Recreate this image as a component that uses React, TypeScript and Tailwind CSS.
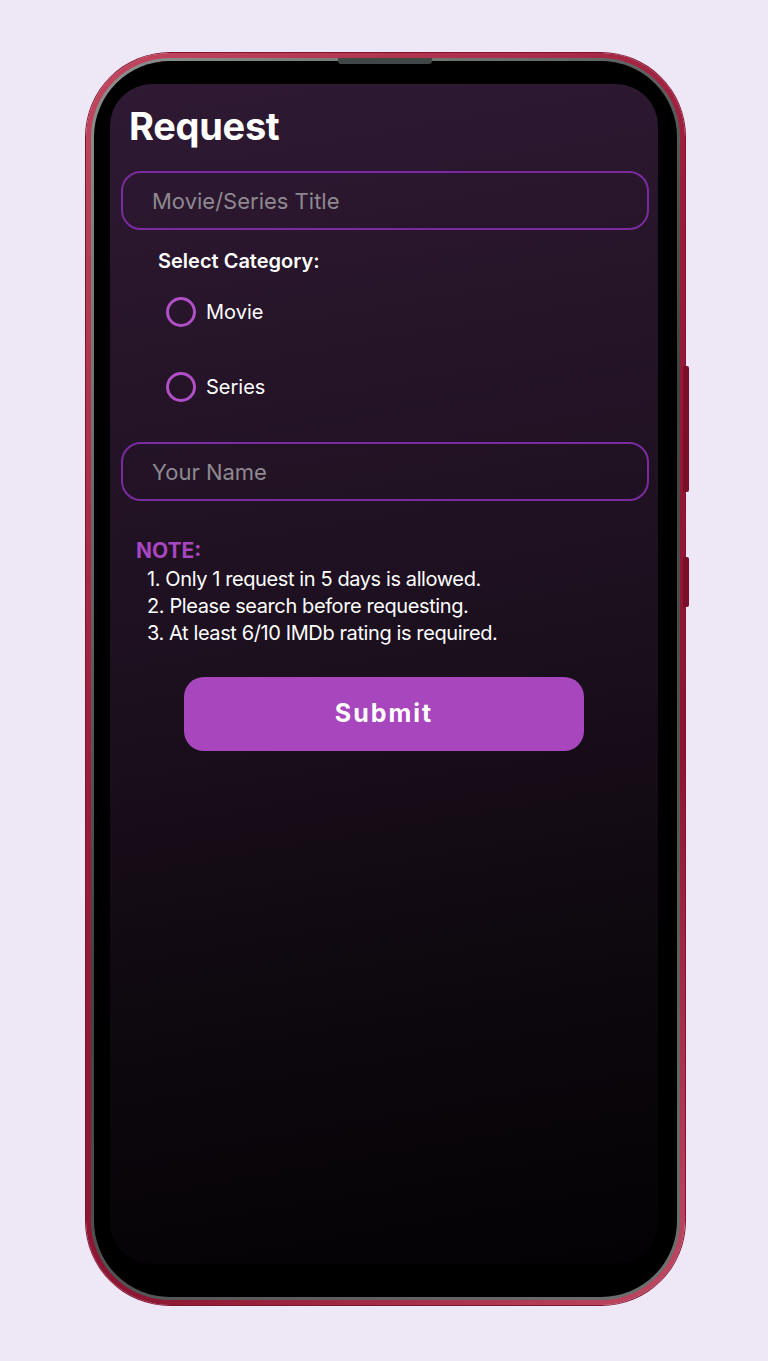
import React, { useState } from 'react';

const font = { fontFamily: 'Inter, "Noto Sans", sans-serif' };

const notes = [
    '1. Only 1 request in 5 days is allowed.',
    '2. Please search before requesting.',
    '3. At least 6/10 IMDb rating is required.',
];

function Radio({ label, checked, onSelect }: { label: string; checked: boolean; onSelect: () => void }) {
    return (
        <button type="button" onClick={onSelect} className="flex h-[40px] items-center pl-[45px] text-left">
            <span className="flex h-[30px] w-[30px] items-center justify-center rounded-full border-[3px] border-[#b04fc6]">
                {checked && <span className="h-[14px] w-[14px] rounded-full bg-[#b04fc6]" />}
            </span>
            <span className="ml-[10px] text-[20px] leading-[24px] text-white">{label}</span>
        </button>
    );
}

export default function App() {
    const [category, setCategory] = useState('');

    return (
        <div className="h-[1361px] w-[768px] bg-[#ede7f6] pl-[86px] pt-[53px]" style={font}>
            {/* phone body */}
            <div className="relative h-[1252px] w-[599px]">
                {/* side buttons */}
                <div className="absolute right-[-4px] top-[313px] h-[126px] w-[6px] rounded-r-[2px] bg-[#7a0f2a]" />
                <div className="absolute right-[-4px] top-[504px] h-[50px] w-[6px] rounded-r-[2px] bg-[#7a0f2a]" />

                <div className="h-full w-full rounded-[84px] bg-[linear-gradient(135deg,#c2475f_0%,#9b1b3a_40%,#8c1532_70%,#c04a63_100%)] p-[5px] shadow-[0_0_0_1px_#7d1430]">
                    <div className="h-full w-full rounded-[79px] bg-[linear-gradient(135deg,#8d9190_0%,#3f4343_50%,#6d7170_100%)] p-[3px]">
                        <div className="flex h-full w-full flex-col rounded-[76px] bg-black pb-[33px] pl-[16px] pr-[19px] pt-[23px]">
                            {/* screen */}
                            <div className="flex-1 overflow-hidden rounded-[42px] bg-[linear-gradient(170deg,#2f1933_0%,#251428_25%,#1b0f1d_50%,#0c070d_78%,#040204_100%)] px-[11px] pt-[19px]">
                                <h1 className="ml-[8px] text-[38px] font-bold leading-[46px] tracking-[-0.3px] text-white">
                                    Request
                                </h1>

                                <input
                                    className="mt-[22px] block h-[59px] w-[528px] rounded-[20px] border-2 border-[#7a2ba0] bg-transparent px-[29px] text-[22px] text-white outline-none placeholder:text-[#8e8991]"
                                    placeholder="Movie/Series Title"
                                />

                                <p className="ml-[37px] mt-[19px] text-[20px] font-semibold leading-[24px] text-white">
                                    Select Category:
                                </p>

                                <div className="mt-[19px] flex flex-col gap-[35px]">
                                    <Radio label="Movie" checked={category === 'movie'} onSelect={() => setCategory('movie')} />
                                    <Radio label="Series" checked={category === 'series'} onSelect={() => setCategory('series')} />
                                </div>

                                <input
                                    className="mt-[35px] block h-[59px] w-[528px] rounded-[20px] border-2 border-[#7a2ba0] bg-transparent px-[29px] text-[22px] text-white outline-none placeholder:text-[#8e8991]"
                                    placeholder="Your Name"
                                />

                                <p className="ml-[15px] mt-[37px] text-[21px] font-bold leading-[26px] text-[#a845c0]">NOTE:</p>
                                <ul className="ml-[26px] mt-[2px]">
                                    {notes.map((n) => (
                                        <li key={n} className="text-[20px] leading-[27px] tracking-[-0.4px] text-white">
                                            {n}
                                        </li>
                                    ))}
                                </ul>

                                <button
                                    type="button"
                                    className="mx-auto mt-[30px] flex h-[74px] w-[400px] items-center justify-center rounded-[20px] bg-[#a846bd] text-[25px] font-bold tracking-[2px] text-white"
                                >
                                    Submit
                                </button>
                            </div>
                        </div>
                    </div>
                </div>

                {/* top speaker notch */}
                <div className="absolute left-[252px] top-[5px] h-[6px] w-[94px] rounded-b-[3px] bg-[#414646]" />
            </div>
        </div>
    );
}
